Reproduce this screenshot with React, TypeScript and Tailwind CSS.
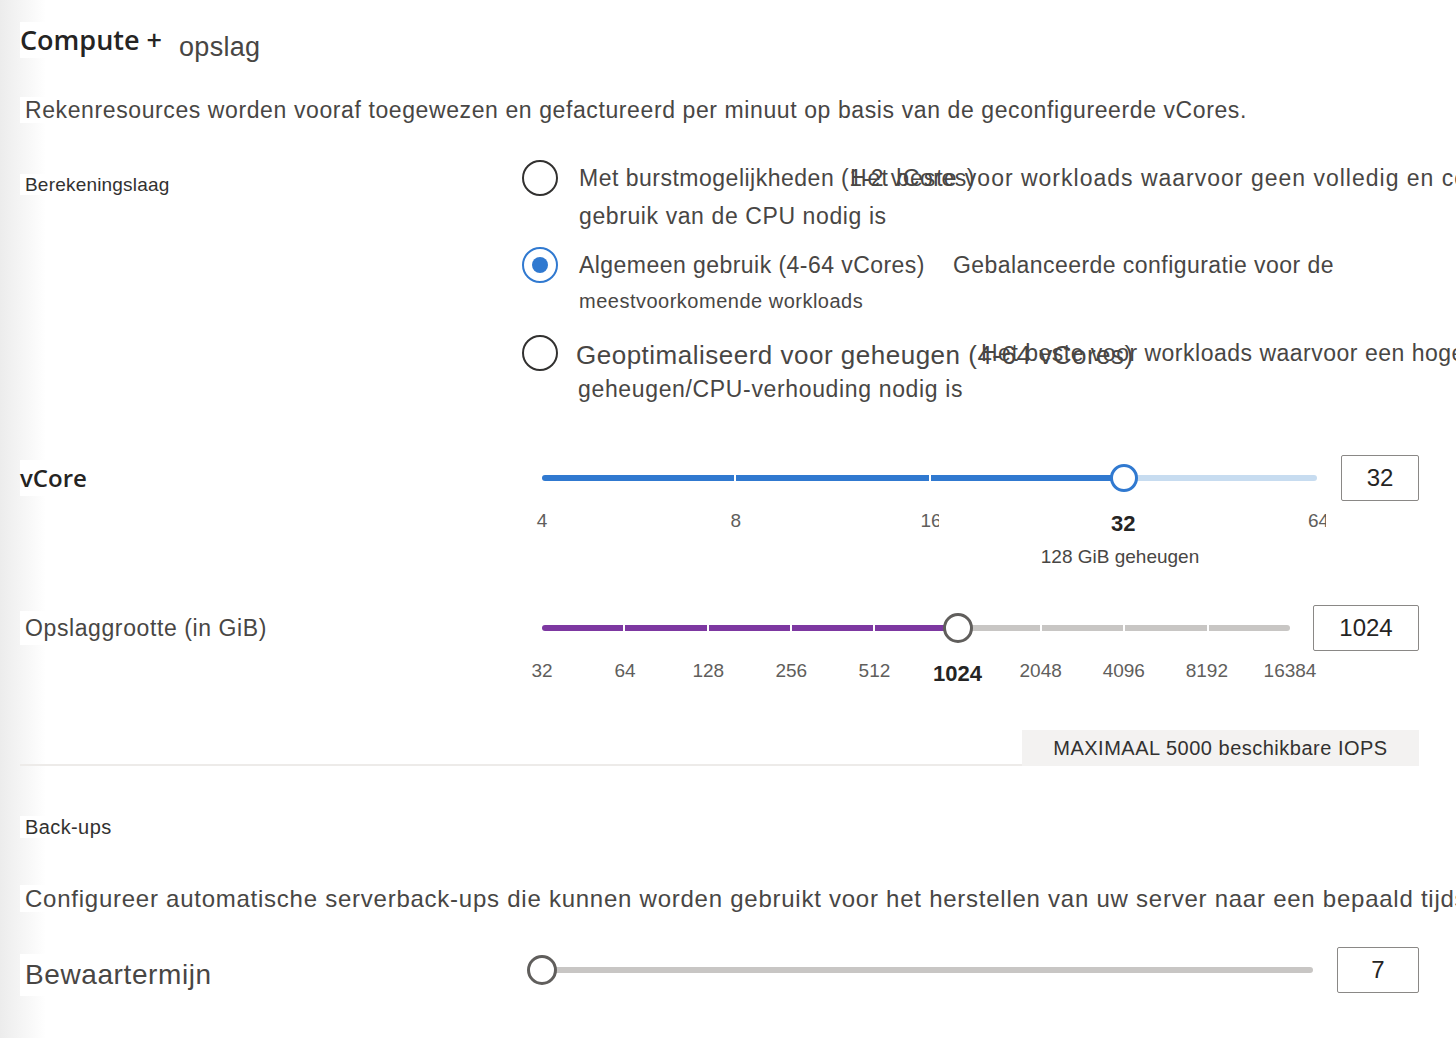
import React from "react";

const vCoreTicks = ["4", "8", "16", "32", "64"];
const storageTicks = ["32", "64", "128", "256", "512", "1024", "2048", "4096", "8192", "16384"];

const Track = ({ segments, filled, fill, rest }: { segments: number; filled: number; fill: string; rest: string }) => (
  <div className="flex h-[6px] w-full gap-[2px] overflow-hidden rounded-full">
    {Array.from({ length: segments }).map((_, i) => (
      <div key={i} className={`h-full flex-1 ${i < filled ? fill : rest}`} />
    ))}
  </div>
);

const ValueBox = ({ value, width }: { value: string; width: string }) => (
  <div className={`flex h-[46px] items-center justify-center rounded-[2px] border border-[#8a8886] bg-white text-[24px] text-[#252423] ${width}`}>
    {value}
  </div>
);

const Radio = ({ checked }: { checked?: boolean }) =>
  checked ? (
    <div className="flex h-[36px] w-[36px] shrink-0 items-center justify-center rounded-full border-2 border-[#3079d0] bg-white">
      <div className="h-[16px] w-[16px] rounded-full bg-[#3079d0]" />
    </div>
  ) : (
    <div className="h-[36px] w-[36px] shrink-0 rounded-full border-2 border-[#323130] bg-white" />
  );

export default function App() {
  return (
    <div className="relative h-[1038px] w-[1456px] overflow-hidden bg-[linear-gradient(to_right,#ececec_0px,#ffffff_46px)] font-['Liberation_Sans',Arial,sans-serif] text-[#484644]">
      <div className="pl-[20px]">
        {/* header */}
        <div className="flex h-[92px] items-start pt-[22px]">
          <span className="bg-white font-['Open_Sans',sans-serif] text-[27px] font-semibold leading-[36px] text-[#252423]">Compute +</span>
          <span className="ml-[17px] mt-[7px] text-[27px] leading-[36px] tracking-[0.3px]">opslag</span>
        </div>

        <div className="h-[36px] whitespace-nowrap">
          <span className="bg-white pl-[5px] text-[23px] leading-[36px] tracking-[0.6px]">
            Rekenresources worden vooraf toegewezen en gefactureerd per minuut op basis van de geconfigureerde vCores.
          </span>
        </div>

        {/* compute tier */}
        <div className="mt-[32px] grid grid-cols-[502px_1fr]">
          <div className="pt-[7px]">
            <span className="bg-white pl-[5px] text-[19px] leading-[36px] tracking-[0.2px] text-[#323130]">Berekeningslaag</span>
          </div>
          <div className="flex flex-col">
            <div className="flex items-start">
              <Radio />
              <div className="ml-[21px]">
                <div className="relative h-[36px] whitespace-nowrap text-[23px] leading-[36px]">
                  <span className="tracking-[0.5px]">Met burstmogelijkheden (1-2 vCores)</span>
                  <span className="absolute left-[271px] top-0 tracking-[1px]">Het beste voor workloads waarvoor geen volledig en continu</span>
                </div>
                <div className="h-[40px] text-[23px] leading-[40px] tracking-[0.6px]">gebruik van de CPU nodig is</div>
              </div>
            </div>

            <div className="mt-[11px] flex items-start">
              <Radio checked />
              <div className="ml-[21px]">
                <div className="flex h-[36px] whitespace-nowrap text-[23px] leading-[36px] tracking-[0.45px]">
                  <span>Algemeen gebruik (4-64 vCores)</span>
                  <span className="ml-[28px]">Gebalanceerde configuratie voor de</span>
                </div>
                <div className="h-[36px] text-[20px] leading-[36px] tracking-[0.5px]">meestvoorkomende workloads</div>
              </div>
            </div>

            <div className="mt-[16px] flex items-start">
              <Radio />
              <div className="ml-[18px]">
                <div className="relative h-[36px] whitespace-nowrap leading-[40px]">
                  <span className="text-[26px] tracking-[0.5px]">Geoptimaliseerd voor geheugen (4-64 vCores)</span>
                  <span className="absolute left-[405px] top-[-2px] text-[23px] tracking-[0.5px]">Het beste voor workloads waarvoor een hoge</span>
                </div>
                <div className="ml-[2px] h-[37px] text-[23px] leading-[37px] tracking-[0.65px]">geheugen/CPU-verhouding nodig is</div>
              </div>
            </div>
          </div>
        </div>

        {/* vCore */}
        <div className="mt-[47px] grid grid-cols-[502px_1fr]">
          <div className="flex h-[46px] items-center">
            <span className="bg-white font-['Open_Sans',sans-serif] text-[24px] font-semibold text-[#252423]">vCore</span>
          </div>
          <div>
            <div className="flex items-center">
              <div className="relative ml-[20px] w-[775px]">
                <Track segments={4} filled={3} fill="bg-[#3079d0]" rest="bg-[#c7dcf0]" />
                <div className="absolute left-[568px] top-[-11px] h-[28px] w-[28px] rounded-full border-[3px] border-[#3079d0] bg-white" />
              </div>
              <div className="ml-[24px]">
                <ValueBox value="32" width="w-[78px]" />
              </div>
            </div>
            <div className="ml-[20px] mt-[5px] flex w-[775px] justify-between text-[19px] leading-[30px] text-[#605e5c]">
              {vCoreTicks.map((t) =>
                t === "32" ? (
                  <span key={t} className="flex w-0 justify-center pt-[3px] text-[22px] font-bold text-[#252423]">{t}</span>
                ) : (
                  <span key={t} className="flex w-0 justify-center">
                    <span className="block w-[18px] shrink-0 overflow-hidden whitespace-nowrap text-center">{t}</span>
                  </span>
                )
              )}
            </div>
            <div className="ml-[20px] w-[775px]">
              <div className="ml-[578px] flex w-0 justify-center whitespace-nowrap text-[19px] leading-[36px]">128 GiB geheugen</div>
            </div>
          </div>
        </div>

        {/* storage */}
        <div className="mt-[30px] grid grid-cols-[502px_1fr]">
          <div className="flex h-[46px] items-center">
            <span className="bg-white pl-[5px] text-[23px] tracking-[0.6px]">Opslaggrootte (in GiB)</span>
          </div>
          <div>
            <div className="flex items-center">
              <div className="relative ml-[20px] w-[748px]">
                <Track segments={9} filled={5} fill="bg-[#7d38a1]" rest="bg-[#c8c6c4]" />
                <div className="absolute left-[401px] top-[-12px] h-[30px] w-[30px] rounded-full border-[3px] border-[#605e5c] bg-white" />
              </div>
              <div className="ml-[23px]">
                <ValueBox value="1024" width="w-[106px]" />
              </div>
            </div>
            <div className="ml-[20px] mt-[5px] flex w-[748px] justify-between text-[19px] leading-[30px] text-[#605e5c]">
              {storageTicks.map((t) =>
                t === "1024" ? (
                  <span key={t} className="flex w-0 justify-center pt-[3px] text-[22px] font-bold text-[#252423]">{t}</span>
                ) : (
                  <span key={t} className="flex w-0 justify-center whitespace-nowrap">{t}</span>
                )
              )}
            </div>
          </div>
        </div>

        {/* iops + divider */}
        <div className="mt-[41px] flex items-end pr-[37px]">
          <div className="flex-1 border-b-2 border-[#edebe9]" />
          <div className="flex h-[36px] w-[397px] items-center justify-center bg-[#f3f2f1] text-[20px] tracking-[0.5px] text-[#323130]">
            MAXIMAAL 5000 beschikbare IOPS
          </div>
        </div>

        {/* backups */}
        <div className="mt-[43px] h-[36px]">
          <span className="bg-white pl-[5px] text-[20px] leading-[36px] tracking-[0.4px] text-[#323130]">Back-ups</span>
        </div>
        <div className="mt-[36px] h-[36px] whitespace-nowrap">
          <span className="bg-white pl-[5px] text-[24px] leading-[36px] tracking-[0.75px]">
            Configureer automatische serverback-ups die kunnen worden gebruikt voor het herstellen van uw server naar een bepaald tijdstip.
          </span>
        </div>

        <div className="mt-[30px] grid grid-cols-[502px_1fr]">
          <div className="flex h-[46px] items-center pt-[10px]">
            <span className="bg-white pl-[5px] text-[28px] tracking-[0.6px]">Bewaartermijn</span>
          </div>
          <div className="flex items-center">
            <div className="relative ml-[20px] w-[771px]">
              <Track segments={1} filled={0} fill="bg-[#605e5c]" rest="bg-[#c8c6c4]" />
              <div className="absolute left-[-15px] top-[-12px] h-[30px] w-[30px] rounded-full border-[3px] border-[#605e5c] bg-white" />
            </div>
            <div className="ml-[24px]">
              <ValueBox value="7" width="w-[82px]" />
            </div>
          </div>
        </div>
      </div>
    </div>
  );
}
